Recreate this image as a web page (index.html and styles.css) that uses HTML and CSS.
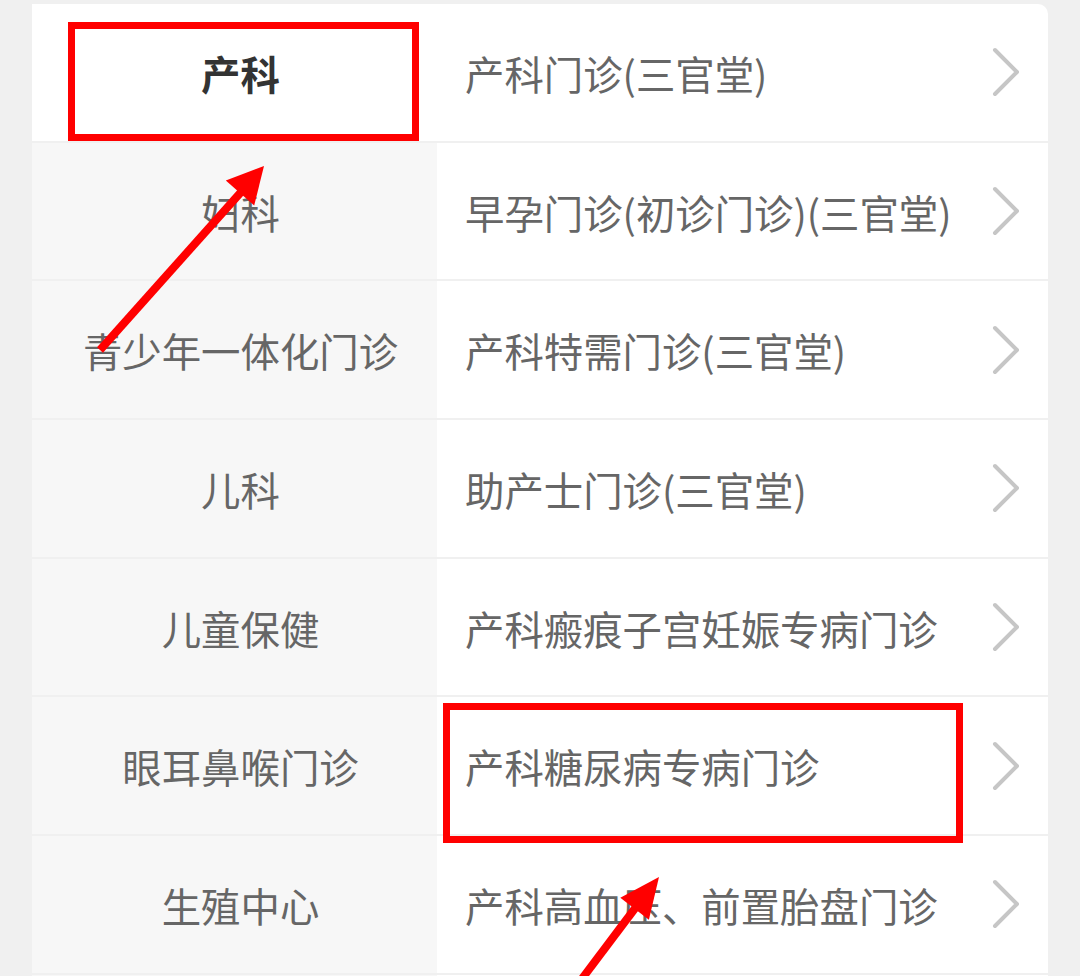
FILE: index.html
```html
<!DOCTYPE html>
<html lang="zh-CN">
<head>
  <meta charset="UTF-8" />
  <meta name="viewport" content="width=device-width, initial-scale=1.0"/>
  <title>选择科室</title>
  <link rel="stylesheet" href="styles.css">
</head>
<body>

  <div class="panel">
    <!-- 一级科室 -->
    <ul class="dept-list">
      <li class="active">产科</li>
      <li>妇科</li>
      <li>青少年一体化门诊</li>
      <li>儿科</li>
      <li>儿童保健</li>
      <li>眼耳鼻喉门诊</li>
      <li>生殖中心</li>
      <li></li>
    </ul>

    <!-- 二级门诊 -->
    <ul class="clinic-list">
      <li><span>产科门诊(三官堂)</span><svg class="chevron" viewBox="0 0 28 50"><polyline points="3,3 25,25 3,47"/></svg></li>
      <li><span>早孕门诊(初诊门诊)(三官堂)</span><svg class="chevron" viewBox="0 0 28 50"><polyline points="3,3 25,25 3,47"/></svg></li>
      <li><span>产科特需门诊(三官堂)</span><svg class="chevron" viewBox="0 0 28 50"><polyline points="3,3 25,25 3,47"/></svg></li>
      <li><span>助产士门诊(三官堂)</span><svg class="chevron" viewBox="0 0 28 50"><polyline points="3,3 25,25 3,47"/></svg></li>
      <li><span>产科瘢痕子宫妊娠专病门诊</span><svg class="chevron" viewBox="0 0 28 50"><polyline points="3,3 25,25 3,47"/></svg></li>
      <li><span>产科糖尿病专病门诊</span><svg class="chevron" viewBox="0 0 28 50"><polyline points="3,3 25,25 3,47"/></svg></li>
      <li><span>产科高血压、前置胎盘门诊</span><svg class="chevron" viewBox="0 0 28 50"><polyline points="3,3 25,25 3,47"/></svg></li>
      <li></li>
    </ul>
  </div>

  <!-- 标注 -->
  <svg class="marks" width="1080" height="976" viewBox="0 0 1080 976">
    <rect x="71.5" y="25.5" width="344" height="112" />
    <rect x="446.5" y="706.5" width="513" height="133" />
    <line x1="100" y1="350" x2="242" y2="191" />
    <polygon points="264,166 254.2,205.6 225.8,180.4" />
    <line x1="566" y1="1000" x2="636" y2="907" />
    <polygon points="659,877 648.9,919.7 620.3,897.7" />
  </svg>

</body>
</html>
```

FILE: styles.css
```css
body {
  margin: 0;
  padding: 4px 0 0 32px;
  background: #f0f0f0;
  font-family: "Noto Sans CJK SC", "Noto Sans", sans-serif;
  overflow: hidden;
}

.panel {
  display: flex;
  width: 1016px;
  background: #fff;
  border-radius: 0 10px 0 0;
  overflow: hidden;
}

.dept-list,
.clinic-list {
  list-style: none;
  margin: 0;
  padding: 0;
}

.dept-list li,
.clinic-list li {
  box-sizing: border-box;
  height: 138.7px;
  border-bottom: 2px solid #f0f0f0;
  display: flex;
  align-items: center;
  font-size: 39.4px;
  color: #666;
}

.dept-list {
  width: 405px;
}

.dept-list li {
  justify-content: center;
  padding-left: 12px;
  background: #f7f7f7;
}

.dept-list li.active {
  background: #fff;
  color: #333;
  font-weight: bold;
}

.clinic-list {
  flex: 1;
}

.clinic-list li {
  justify-content: space-between;
  padding: 0 28px 0 28px;
}

.chevron {
  width: 28px;
  height: 50px;
  flex-shrink: 0;
}

.chevron polyline {
  fill: none;
  stroke: #c6c6c6;
  stroke-width: 4;
  stroke-linecap: round;
  stroke-linejoin: round;
}

/* 红色标注 */
.marks {
  position: absolute;
  top: 0;
  left: 0;
  pointer-events: none;
}

.marks rect {
  fill: none;
  stroke: #ff0000;
  stroke-width: 7;
}

.marks line {
  stroke: #ff0000;
  stroke-width: 8;
}

.marks polygon {
  fill: #ff0000;
}
```
